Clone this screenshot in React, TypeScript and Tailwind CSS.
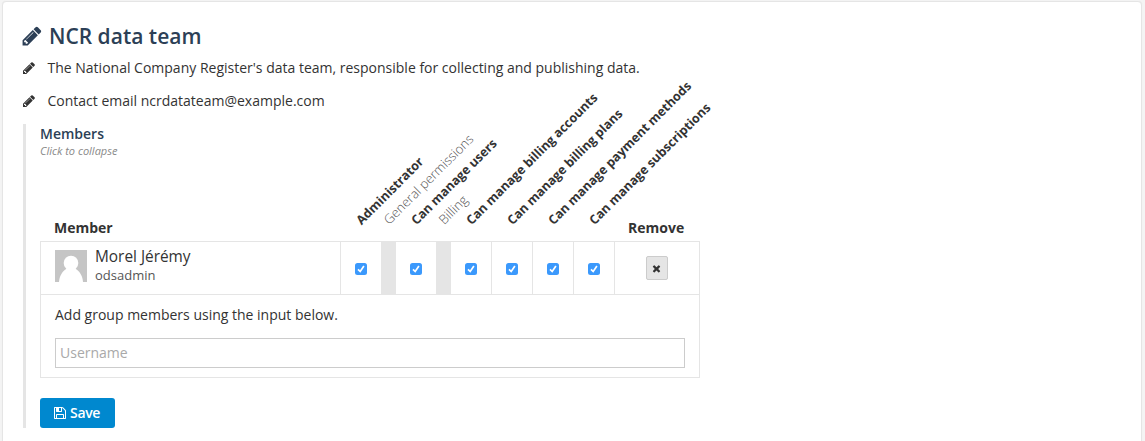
import React from "react";

function Icon({ d, className }: { d: string; className: string }) {
  return (
    <svg viewBox="0 0 1792 1792" fill="currentColor" className={className} aria-hidden="true">
      <path d={d} />
    </svg>
  );
}

const PENCIL =
  "M491 1536l91-91-235-235-91 91v107h128v128h107zm523-928q0-22-22-22-10 0-17 7l-542 542q-7 7-7 17 0 22 22 22 10 0 17-7l542-542q7-7 7-17zm-54-192l416 416-832 832h-416v-416zm683 96q0 53-37 90l-166 166-416-416 166-165q36-38 90-38 53 0 91 38l235 234q37 39 37 91z";
const TIMES =
  "M1490 1322q0 40-28 68l-136 136q-28 28-68 28t-68-28l-294-294-294 294q-28 28-68 28t-68-28l-136-136q-28-28-28-68t28-68l294-294-294-294q-28-28-28-68t28-68l136-136q28-28 68-28t68 28l294 294 294-294q28-28 68-28t68 28l136 136q28 28 28 68t-28 68l-294 294 294 294q28 28 28 68z";
const FLOPPY =
  "M512 1536h768v-384h-768v384zm896 0h128v-896q0-14-10-38.500t-20-34.500l-281-281q-10-10-34-20t-39-10v416q0 40-28 68t-68 28h-576q-40 0-68-28t-28-68v-416h-128v1280h128v-416q0-40 28-68t68-28h832q40 0 68 28t28 68v416zm-384-928v-320q0-13-9.500-22.500t-22.500-9.500h-192q-13 0-22.500 9.500t-9.500 22.500v320q0 13 9.500 22.500t22.500 9.500h192q13 0 22.500-9.500t9.500-22.500zm640 32v928q0 40-28 68t-68 28h-1344q-40 0-68-28t-28-68v-1344q0-40 28-68t68-28h928q40 0 88 20t76 48l280 280q28 28 48 76t20 88z";

type Column = { label: string; group?: boolean; divided?: boolean };

const columns: Column[] = [
  { label: "Administrator" },
  { label: "General permissions", group: true },
  { label: "Can manage users" },
  { label: "Billing", group: true },
  { label: "Can manage billing accounts", divided: true },
  { label: "Can manage billing plans", divided: true },
  { label: "Can manage payment methods", divided: true },
  { label: "Can manage subscriptions", divided: true },
];

function columnWidth(c: Column) {
  if (c.group) return "w-[15px]";
  return c.divided ? "w-[41px]" : "w-10";
}

function CheckBox() {
  return (
    <span className="flex size-3 items-center justify-center rounded-[2.5px] bg-[#3b99fc]">
      <svg viewBox="0 0 12 12" className="size-3" fill="none" stroke="white" strokeWidth="1.7">
        <path d="M3 6.300L5.200 8.500L8.900 3" />
      </svg>
    </span>
  );
}

function HeaderRow() {
  return (
    <div className="flex h-[23px] text-sm leading-[19px] font-bold">
      <div className="w-[301px] pl-3.5">Member</div>
      {columns.map((c) => (
        <div key={c.label} className={`relative ${columnWidth(c)}`}>
          <span
            className={
              c.group
                ? "absolute bottom-[13px] left-[11px] origin-bottom-left -rotate-45 text-[13px] leading-[18px] font-light whitespace-nowrap text-[#555]"
                : "absolute bottom-3 left-[23.5px] origin-bottom-left -rotate-45 text-[12.6px] leading-[18px] font-bold whitespace-nowrap"
            }
          >
            {c.label}
          </span>
        </div>
      ))}
      <div className="flex-1 pl-[13px]">Remove</div>
    </div>
  );
}

function MemberRow() {
  return (
    <div className="flex h-[53px] border-b border-[#e5e5e5]">
      <div className="flex w-[300px] border-r border-[#e5e5e5] pt-2 pl-3.5">
        <svg viewBox="0 0 32 32" className="size-8">
          <path fill="#c5c5c5" d="M0 0h32v32H0z" />
          <circle cx="16" cy="13" r="7.300" fill="white" />
          <path fill="white" d="M4 32C4.500 24.500 9 19.500 12.500 18.500H19.500C23 19.500 27.500 24.500 28 32Z" />
        </svg>
        <div className="-mt-1 pl-2">
          <div className="text-[15.4px] leading-[21px]">Morel Jérémy</div>
          <div className="text-[13px] leading-4 text-[#555]">odsadmin</div>
        </div>
      </div>
      {columns.map((c) =>
        c.group ? (
          <div key={c.label} className="w-[15px] bg-[#e5e5e5]" />
        ) : (
          <div
            key={c.label}
            className={`flex items-center justify-center pt-0.5 ${columnWidth(c)} ${c.divided ? "border-r border-[#e5e5e5]" : ""}`}
          >
            <CheckBox />
          </div>
        ),
      )}
      <div className="flex flex-1 items-center justify-center">
        <button className="flex h-6 w-[22px] items-center justify-center rounded-[2px] border border-[#ccc] bg-[#e5e5e5] pr-px">
          <Icon d={TIMES} className="size-[11px]" />
        </button>
      </div>
    </div>
  );
}

export default function App() {
  return (
    <div className="h-[441px] overflow-hidden bg-[#f4f4f4] pt-px pr-[3px] pl-0.5 font-['Open_Sans',sans-serif] text-[#333]">
      <main className="h-[460px] rounded-[4px] border border-[#e5e5e5] bg-white pt-[19px] pl-5 shadow-[0_0_1px_#e5e5e5]">
        <h1 className="flex h-[30px] items-center text-[21px] leading-[30px] font-semibold text-[#2c3f56]">
          <Icon d={PENCIL} className="-ml-[2.5px] size-[22px]" />
          <span className="ml-[6.5px]">NCR data team</span>
        </h1>
        <div className="mt-[7px] flex h-5 items-center text-sm">
          <Icon d={PENCIL} className="-ml-[1.5px] size-3.5" />
          <span className="ml-3">
            The National Company Register's data team, responsible for collecting and publishing data.
          </span>
        </div>
        <div className="mt-[13px] flex h-5 items-center text-sm">
          <Icon d={PENCIL} className="-ml-[1.5px] size-3.5" />
          <span className="ml-3">Contact email ncrdatateam@example.com</span>
        </div>
        <section className="mt-[13px] flex h-[304px] w-[677px] flex-col border-l-[3px] border-[#e5e5e5] pl-3.5">
          <h2 className="text-sm leading-5 font-semibold text-[#2c3f56]">Members</h2>
          <p className="-mt-px text-[11px] leading-[15px] text-[#898989] italic">Click to collapse</p>
          <div className="mt-[60px] w-[660px]">
            <HeaderRow />
            <div className="border border-[#e5e5e5]">
              <MemberRow />
              <div className="h-[82px] px-3.5 pt-[10px]">
                <p className="text-sm leading-5">Add group members using the input below.</p>
                <input
                  placeholder="Username"
                  className="mt-[13px] block h-[30px] w-full border border-[#ccc] px-1 pb-0.5 text-sm placeholder:text-[#a9a9a9]"
                />
              </div>
            </div>
          </div>
          <button className="mt-5 flex h-[30px] w-[75px] shrink-0 items-center justify-center rounded-[3px] bg-[#0088cf] pr-0.5 text-sm font-semibold tracking-[-0.4px] text-white">
            <Icon d={FLOPPY} className="mr-[3px] size-3.5" />
            Save
          </button>
        </section>
      </main>
    </div>
  );
}
